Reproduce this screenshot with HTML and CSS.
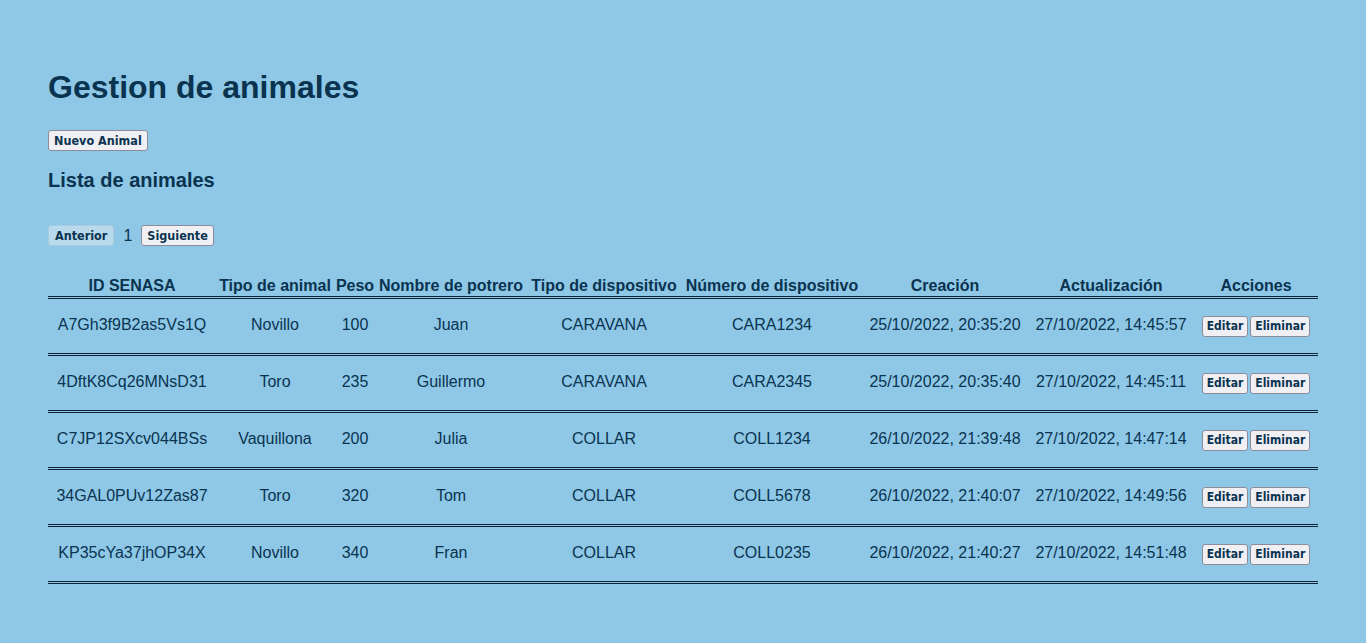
FILE: index.html
```html
<!DOCTYPE html>
<html lang="es">
<head>
<meta charset="utf-8">
<title>Gestion de animales</title>
<link rel="stylesheet" href="styles.css">
</head>
<body>
<main class="page">
  <h1 class="title">Gestion de animales</h1>
  <button class="btn">Nuevo Animal</button>
  <h2 class="subtitle">Lista de animales</h2>
  <div class="pager">
    <button class="btn" disabled>Anterior</button>
    <span class="page-num">1</span>
    <button class="btn">Siguiente</button>
  </div>
  <table class="grid">
    <colgroup>
      <col class="c1"><col class="c2"><col class="c3"><col class="c4"><col class="c5"><col class="c6"><col class="c7"><col class="c8"><col class="c9">
    </colgroup>
    <thead>
      <tr>
        <th>ID SENASA</th><th>Tipo de animal</th><th>Peso</th><th>Nombre de potrero</th><th>Tipo de dispositivo</th><th>Número de dispositivo</th><th>Creación</th><th>Actualización</th><th>Acciones</th>
      </tr>
    </thead>
    <tbody>
      <tr>
        <td>A7Gh3f9B2as5Vs1Q</td><td>Novillo</td><td>100</td><td>Juan</td><td>CARAVANA</td><td>CARA1234</td><td>25/10/2022, 20:35:20</td><td>27/10/2022, 14:45:57</td>
        <td class="actions"><button class="btn sm">Editar</button><button class="btn sm">Eliminar</button></td>
      </tr>
      <tr>
        <td>4DftK8Cq26MNsD31</td><td>Toro</td><td>235</td><td>Guillermo</td><td>CARAVANA</td><td>CARA2345</td><td>25/10/2022, 20:35:40</td><td>27/10/2022, 14:45:11</td>
        <td class="actions"><button class="btn sm">Editar</button><button class="btn sm">Eliminar</button></td>
      </tr>
      <tr>
        <td>C7JP12SXcv044BSs</td><td>Vaquillona</td><td>200</td><td>Julia</td><td>COLLAR</td><td>COLL1234</td><td>26/10/2022, 21:39:48</td><td>27/10/2022, 14:47:14</td>
        <td class="actions"><button class="btn sm">Editar</button><button class="btn sm">Eliminar</button></td>
      </tr>
      <tr>
        <td>34GAL0PUv12Zas87</td><td>Toro</td><td>320</td><td>Tom</td><td>COLLAR</td><td>COLL5678</td><td>26/10/2022, 21:40:07</td><td>27/10/2022, 14:49:56</td>
        <td class="actions"><button class="btn sm">Editar</button><button class="btn sm">Eliminar</button></td>
      </tr>
      <tr>
        <td>KP35cYa37jhOP34X</td><td>Novillo</td><td>340</td><td>Fran</td><td>COLLAR</td><td>COLL0235</td><td>26/10/2022, 21:40:27</td><td>27/10/2022, 14:51:48</td>
        <td class="actions"><button class="btn sm">Editar</button><button class="btn sm">Eliminar</button></td>
      </tr>
    </tbody>
  </table>
</main>
</body>
</html>
```

FILE: styles.css
```css
html, body {
  margin: 0;
  background: #8ec8e6;
}
body {
  font-family: "Liberation Sans", Arial, sans-serif;
  color: #0a3350;
}
.page {
  padding: 48px 48px 40px;
}
.title {
  font-size: 32px;
  font-weight: bold;
  margin: 21px 0 24px;
  line-height: 37px;
}
.btn {
  font-family: "DejaVu Sans Condensed", "DejaVu Sans", Verdana, sans-serif;
  font-weight: bold;
  font-size: 12.5px;
  color: #0a3350;
  background: #efeff4;
  border: 1px solid #8c8c9a;
  border-radius: 3px;
  height: 21px;
  padding: 0 5px;
  margin: 0;
  line-height: 19px;
}
.btn:disabled {
  background: #b8daec;
  border-color: #a7cbdf;
  color: #0a3350;
  padding: 0 6px;
}
.subtitle {
  font-size: 20px;
  font-weight: bold;
  margin: 18px 0 33px;
  line-height: 23px;
}
.pager {
  display: flex;
  align-items: center;
  gap: 9px;
  height: 21px;
}
.page-num {
  font-size: 16px;
}
.grid {
  margin-top: 31px;
  width: 1270px;
  table-layout: fixed;
  border-collapse: collapse;
  font-size: 16px;
}
.c1 { width: 168px; }
.c2 { width: 118px; }
.c3 { width: 42px; }
.c4 { width: 150px; }
.c5 { width: 156px; }
.c6 { width: 180px; }
.c7 { width: 166px; }
.c8 { width: 166px; }
.c9 { width: 124px; }
.grid th {
  font-weight: bold;
  padding: 0 0 1px;
  height: 18px;
  text-align: center;
  white-space: nowrap;
  border-bottom: 3px double #0a2236;
}
.grid td {
  text-align: center;
  height: 51px;
  padding: 0 0 3px;
  white-space: nowrap;
  border-bottom: 3px double #0a2236;
}
.grid td.actions {
  font-size: 0;
  height: 54px;
  padding: 0;
}
.btn.sm {
  font-size: 12px;
  padding: 0 4px;
  margin: 0 1px;
}
```
